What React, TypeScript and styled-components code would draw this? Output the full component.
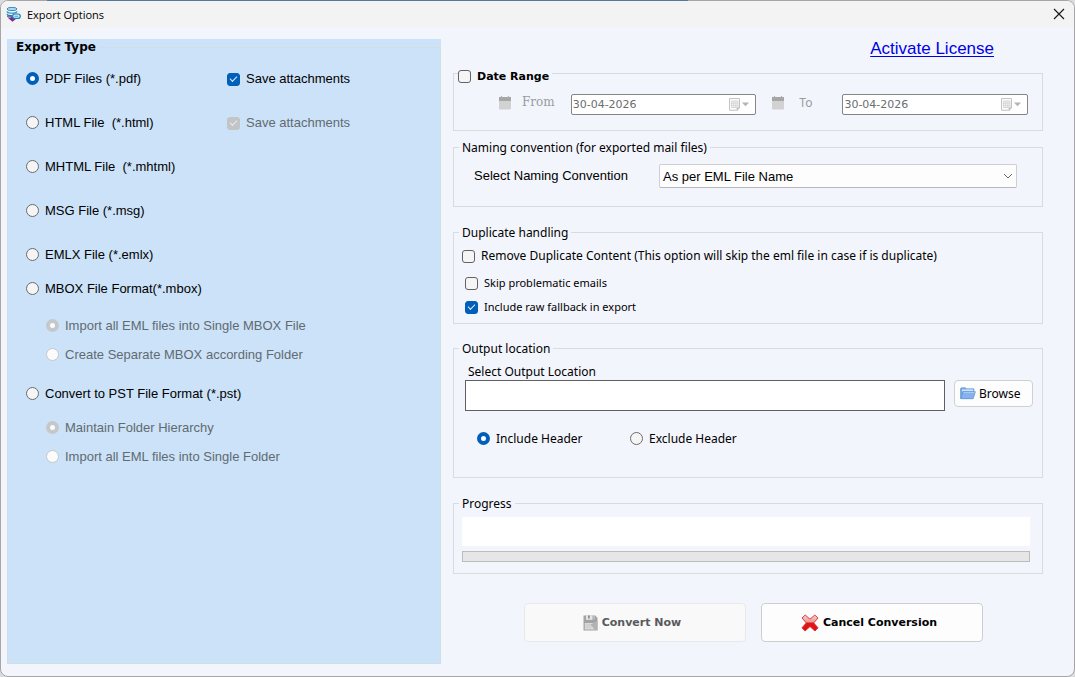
import React from "react";
import styled, { createGlobalStyle, css } from "styled-components";

const SANS = '"Liberation Sans", Arial, sans-serif';
const UI = '"Noto Sans", "Segoe UI", sans-serif';
const VERDANA = '"DejaVu Sans", Verdana, sans-serif';

const GlobalStyle = createGlobalStyle`
  *, *::before, *::after { box-sizing: border-box; }
  body { margin: 0; background: #dcdcde; color: #000; font-family: ${UI}; font-size: 12px; }
`;

const Window = styled.div`
  position: relative;
  display: flex;
  flex-direction: column;
  min-height: 100vh;
  border: 1px solid #a6a6a8;
  border-radius: 8px;
  background: #f3f5fc;
  &::before {
    content: "";
    position: absolute;
    top: -1px;
    left: 46px;
    right: 36%;
    height: 1px;
    background: #55779c;
  }
`;

const TitleBar = styled.header`
  display: flex;
  align-items: center;
  gap: 6px;
  height: 27px;
  padding: 0 8px 0 5px;
  border-radius: 7px 7px 0 0;
  background: #f3f3f3;
`;

const Title = styled.h1`
  flex: 1;
  margin: 0;
  font: 400 11px/18px "Open Sans", "Segoe UI", sans-serif;
`;

const CloseButton = styled.button`
  display: flex;
  padding: 0 1px 2px;
  border: 0;
  background: none;
`;

const Main = styled.main`
  flex: 1;
  display: grid;
  grid-template-columns: minmax(0, 434fr) minmax(0, 590fr);
  gap: 12px;
  padding: 11px 31px 12px 6px;
`;

const Panel = styled.section`
  display: flex;
  background: #cbe2f8;
`;

const groupBase = css`
  min-width: 0;
  margin: 0;
  border: 1px solid #d9dbdf;
`;

const ExportTypes = styled.fieldset`
  ${groupBase}
  flex: 1;
  border-color: #cfdde6;
  padding: 15px 8px 0 18px;
`;

const PanelLegend = styled.legend`
  margin-left: -12px;
  padding: 0 4px 0 2px;
  font: 700 12px/16px ${VERDANA};
`;

const TypeList = styled.div`
  display: flex;
  flex-direction: column;
  gap: 26px;
  margin-bottom: 16px;
`;

const TypeRow = styled.div`
  display: grid;
  grid-template-columns: 201px 1fr;
`;

const SubOptions = styled.div<{ $top: number }>`
  display: flex;
  flex-direction: column;
  gap: 11px;
  padding: ${(p) => p.$top}px 0 21px 20px;
`;

const Option = styled.label<{ $family?: string; $size?: number; $disabled?: boolean }>`
  display: flex;
  align-items: center;
  gap: 6px;
  font: 400 ${(p) => p.$size ?? 12}px/18px ${(p) => p.$family ?? UI};
  color: ${(p) => (p.$disabled ? "#626a71" : "#000")};
  white-space: pre;
`;

const Radio = styled.input.attrs({ type: "radio" })`
  appearance: none;
  flex: none;
  width: 13px;
  height: 13px;
  margin: 0 0 2px;
  border: 1px solid #6c6c6c;
  border-radius: 50%;
  background: #f5f5f5;
  &:checked { border: 4px solid #005fb8; background: #fff; }
  &:disabled { border-color: #c4c8cb; background: #fbfbfb; }
`;

const Check = styled.input.attrs({ type: "checkbox" })`
  appearance: none;
  flex: none;
  display: grid;
  place-content: center;
  width: 13px;
  height: 13px;
  margin: 0;
  border: 1px solid #626262;
  border-radius: 3px;
  background: #f5f5f5;
  &:checked { border-color: #005fb8; background: #005fb8; }
  &:checked:disabled { border-color: #c2c4c6; background: #c2c4c6; }
  &:checked::after {
    content: "";
    width: 7px;
    height: 4px;
    margin-bottom: 2px;
    border: solid #e4eef8;
    border-width: 0 0 1px 1px;
    transform: rotate(-45deg);
  }
`;

const Settings = styled.div`
  display: flex;
  flex-direction: column;
`;

const License = styled.a`
  align-self: flex-end;
  margin: 0 49px 3px 0;
  font: 400 17px/20px ${SANS};
  color: #0000e6;
  text-underline-offset: 2px;
`;

const Group = styled.fieldset<{ $after?: number }>`
  ${groupBase}
  padding: 0;
  margin-bottom: ${(p) => p.$after ?? 17}px;
`;

const GroupBody = styled.div<{ $pad: string }>`
  padding: ${(p) => p.$pad};
`;

const Legend = styled.legend`
  margin-left: 5px;
  padding: 0 3px;
  font: 400 12px/17px ${UI};
`;

const DateLegend = styled.legend`
  margin-left: 4px;
  padding: 6px 3px 0 0;
`;

const DateToggle = styled(Option)`
  font: 700 11px/17px ${VERDANA};
`;

const DateRow = styled.div`
  display: flex;
  align-items: flex-start;
  gap: 16px;
`;

const DateLabel = styled.label<{ $family?: string }>`
  display: flex;
  align-items: center;
  gap: 10px;
  font: 400 12px/17px ${(p) => p.$family ?? UI};
  color: #9a9ba0;
`;

const ToLabel = styled(DateLabel)`
  gap: 14px;
  margin-right: 14px;
`;

const DateBox = styled.div`
  flex: 1;
  min-width: 0;
  display: flex;
  align-items: center;
  height: 21px;
  padding-right: 6px;
  border: 1px solid #858585;
  border-radius: 2px;
  background: #fff;
`;

const DateInput = styled.input`
  flex: 1;
  min-width: 0;
  width: 0;
  padding: 0 0 0 1px;
  border: 0;
  background: none;
  font: 400 11px/17px ${VERDANA};
  color: #6d6d6d;
`;

const NamingRow = styled.label`
  display: grid;
  grid-template-columns: 185px 1fr;
  align-items: center;
  font: 400 13px/18px ${SANS};
`;

const SelectWrap = styled.span`
  display: grid;
  align-items: center;
  border: 1px solid #cfcfd2;
  border-bottom-color: #b8b8ba;
  border-radius: 2px;
  background: #fdfdfe;
  height: 24px;
  & > * { grid-area: 1 / 1; }
  & > svg { justify-self: end; margin-right: 3px; pointer-events: none; }
`;

const Select = styled.select`
  appearance: none;
  width: 100%;
  height: 22px;
  padding: 1px 20px 0 3px;
  border: 0;
  background: none;
  color: #000;
  font: 400 13px/18px ${SANS};
`;

const Stack = styled.div<{ $gap: number; $indent?: number }>`
  display: flex;
  flex-direction: column;
  gap: ${(p) => p.$gap}px;
  padding-left: ${(p) => p.$indent ?? 0}px;
`;

const PathLabel = styled.label`
  display: block;
  margin-left: 3px;
  font: 400 12px/17px ${UI};
`;

const PathRow = styled.div`
  display: flex;
  align-items: flex-start;
  gap: 9px;
`;

const PathInput = styled.input`
  flex: 1;
  min-width: 0;
  height: 31px;
  border: 1px solid #5f6063;
  background: #fff;
`;

const BrowseButton = styled.button`
  display: flex;
  align-items: center;
  gap: 3px;
  width: 79px;
  height: 27px;
  padding: 0 5px;
  border: 1px solid #cfd0d3;
  border-radius: 4px;
  background: #fdfdfe;
  color: #000;
  font: 400 12px/18px ${UI};
`;

const HeaderChoice = styled.div`
  display: grid;
  grid-template-columns: 153px 1fr;
  margin-top: 19px;
  padding-left: 12px;
`;

const StatusBox = styled.output`
  display: block;
  height: 29px;
  background: #fff;
`;

const ProgressBar = styled.progress`
  appearance: none;
  display: block;
  width: 100%;
  height: 11px;
  margin-top: 5px;
  border: 1px solid #bcbcbc;
  background: #e6e6e6;
  &::-webkit-progress-bar { background: #e6e6e6; }
`;

const Actions = styled.div`
  display: grid;
  grid-template-columns: 1fr 1fr;
  gap: 15px;
  margin-top: 12px;
  padding: 0 60px 0 71px;
`;

const ActionButton = styled.button`
  display: flex;
  align-items: center;
  justify-content: center;
  gap: 4px;
  height: 39px;
  padding: 0 12px 0 6px;
  border: 1px solid #cdced0;
  border-radius: 4px;
  background: #fdfdfe;
  color: #000;
  font: 700 11px/18px ${VERDANA};
  &:disabled { border-color: #e7e8ec; background: #f9f9fa; color: #5a5a5a; }
`;

const AppIcon = () => (
  <svg width="15" height="15" viewBox="0 0 15 15" aria-hidden="true">
    <path d="M1 2v7c0 1 2 2 5 2s5-1 5-2V2z" fill="#e3f2fb" />
    <ellipse cx="6" cy="2" rx="5" ry="1.6" fill="#a9dcf5" stroke="#2581b8" strokeWidth=".9" />
    <path d="M1 4.3c0 2.6 10 2.6 10 0M1 6.8c0 2.6 10 2.6 10 0" fill="none" stroke="#2f86b4" strokeWidth="1.1" />
    <path d="M1.500 10.500h3l1.500-.7 4.500 1.700L6.500 14.800z" fill="#7b2d80" />
    <path d="M1 9.200h5l2 1.500" fill="none" stroke="#2b5fa3" strokeWidth="1.300" />
    <rect x="6.600" y="7" width="7.700" height="4.400" rx="2.200" fill="#d9f0fb" stroke="#1d7fba" strokeWidth="1.200" />
    <path d="M8.500 9.200h3.800" stroke="#3aa0d4" strokeWidth="1" />
  </svg>
);

const CloseIcon = () => (
  <svg width="12" height="12" viewBox="0 0 12 12" aria-hidden="true">
    <path d="M1 1l10 10M11 1L1 11" stroke="#1a1a1a" strokeWidth="1.200" />
  </svg>
);

const CalendarIcon = () => (
  <svg width="13" height="14" viewBox="0 0 13 14" aria-hidden="true">
    <rect x="0" y="1" width="12" height="12.500" rx="1" fill="#d2d2d3" />
    <path d="M0 1h12v4H0z" fill="#a6a6a6" />
    <path d="M2.500 0v1.500M9.500 0v1.500" stroke="#b4b4b4" strokeWidth="1.200" />
  </svg>
);

const PickerIcon = () => (
  <svg width="20" height="13" viewBox="0 0 20 13" aria-hidden="true">
    <path d="M.5 .5h10v9.500l-2.300 2.300H.5z" fill="#fafafa" stroke="#c4c4c4" />
    <path d="M2.500 3h6.500v6.500H2.500zM2.500 5.200H9M2.500 7.400H9M4.700 3v6.500M6.900 3v6.500" fill="none" stroke="#cfcfcf" strokeWidth=".8" />
    <path d="M8.200 12.300V10h2.300" fill="none" stroke="#b8b8b8" />
    <path d="M13 4.500h7l-3.500 3.800z" fill="#b4b4b4" />
  </svg>
);

const ChevronIcon = () => (
  <svg width="10" height="6" viewBox="0 0 10 6" aria-hidden="true">
    <path d="M1 1l4 4 4-4" fill="none" stroke="#666" />
  </svg>
);

const FolderIcon = () => (
  <svg width="16" height="13" viewBox="0 0 16 13" aria-hidden="true">
    <path d="M.5 11.500V1.500L1.200.8h4.300l1 1h7.500v3L12 11.500z" fill="#78a6e0" stroke="#6c9bd8" strokeWidth=".7" />
    <path d="M2 2.400h11.300v2H2z" fill="#cfe3fa" />
    <path d="M.8 11.700L3 4.700h12.400L13.200 11.700z" fill="#85b1ec" stroke="#5f92d6" strokeWidth=".7" />
    <path d="M3.600 5.500h11" stroke="#b2d1f6" strokeWidth=".8" />
  </svg>
);

const SaveIcon = () => (
  <svg width="15" height="16" viewBox="0 0 15 16" aria-hidden="true">
    <path d="M.5.500h11.800L14.500 3v12.500H.5z" fill="#a3a3a3" />
    <path d="M3 .5h6.500v4.300H3z" fill="#e6e6e6" />
    <path d="M5 .5h1.800v3H5z" fill="#8e8e8e" />
    <path d="M10.500 .5h1.200v4h-1.200z" fill="#c9c9c9" />
    <path d="M1.800 8h10v6.500h-10z" fill="#dadada" />
    <path d="M2.500 10h6M2.500 12h6" stroke="#c4c4c4" strokeWidth=".8" />
    <path d="M7.500 9.500l7-3.500V15h-2.500z" fill="#b3b3b3" />
  </svg>
);

const CancelIcon = () => (
  <svg width="18" height="18" viewBox="0 0 18 18" aria-hidden="true">
    <defs>
      <linearGradient id="cross" x1="0" y1="0" x2="0" y2="1">
        <stop offset="0" stopColor="#f9cfcc" />
        <stop offset=".42" stopColor="#f09a97" />
        <stop offset=".52" stopColor="#dc1717" />
        <stop offset="1" stopColor="#e60f0f" />
      </linearGradient>
    </defs>
    <path
      d="M4.200 1L9 5.200 13.800 1 17 4 12.700 8.900 17 13.800 14 17 9 12.600 4 17 1 13.800 5.300 8.900 1 4z"
      fill="url(#cross)" stroke="#cf2f2f" strokeWidth=".9" strokeLinejoin="round"
    />
  </svg>
);

interface ChoiceProps {
  name: string;
  text: string;
  checked?: boolean;
  disabled?: boolean;
}

const ExportChoice = ({ name, text, checked, disabled }: ChoiceProps) => (
  <Option $family={SANS} $size={13} $disabled={disabled}>
    <Radio name={name} defaultChecked={checked} disabled={disabled} />
    {text}
  </Option>
);

const SaveAttachments = ({ disabled }: { disabled?: boolean }) => (
  <Option $family={SANS} $size={13} $disabled={disabled}>
    <Check defaultChecked disabled={disabled} />
    Save attachments
  </Option>
);

export default function App() {
  return (
    <>
      <GlobalStyle />
      <Window>
        <TitleBar>
          <AppIcon />
          <Title>Export Options</Title>
          <CloseButton type="button" aria-label="Close"><CloseIcon /></CloseButton>
        </TitleBar>
        <Main>
          <Panel>
            <ExportTypes>
              <PanelLegend>Export Type</PanelLegend>
              <TypeList>
                <TypeRow>
                  <ExportChoice name="type" text="PDF Files (*.pdf)" checked />
                  <SaveAttachments />
                </TypeRow>
                <TypeRow>
                  <ExportChoice name="type" text="HTML File  (*.html)" />
                  <SaveAttachments disabled />
                </TypeRow>
                <ExportChoice name="type" text="MHTML File  (*.mhtml)" />
                <ExportChoice name="type" text="MSG File (*.msg)" />
                <ExportChoice name="type" text="EMLX File (*.emlx)" />
              </TypeList>
              <ExportChoice name="type" text="MBOX File Format(*.mbox)" />
              <SubOptions $top={19}>
                <ExportChoice name="mbox" text="Import all EML files into Single MBOX File" checked disabled />
                <ExportChoice name="mbox" text="Create Separate MBOX according Folder" disabled />
              </SubOptions>
              <ExportChoice name="type" text="Convert to PST File Format (*.pst)" />
              <SubOptions $top={16}>
                <ExportChoice name="pst" text="Maintain Folder Hierarchy" checked disabled />
                <ExportChoice name="pst" text="Import all EML files into Single Folder" disabled />
              </SubOptions>
            </ExportTypes>
          </Panel>
          <Settings>
            <License href="#license">Activate License</License>
            <Group $after={8}>
              <DateLegend>
                <DateToggle><Check />Date Range</DateToggle>
              </DateLegend>
              <GroupBody $pad="9px 14px 15px 45px">
                <DateRow>
                  <DateLabel $family={'"DejaVu Serif", serif'} htmlFor="from"><CalendarIcon />From</DateLabel>
                  <DateBox>
                    <DateInput id="from" defaultValue="30-04-2026" disabled />
                    <PickerIcon />
                  </DateBox>
                  <ToLabel htmlFor="to"><CalendarIcon />To</ToLabel>
                  <DateBox>
                    <DateInput id="to" defaultValue="30-04-2026" disabled />
                    <PickerIcon />
                  </DateBox>
                </DateRow>
              </GroupBody>
            </Group>
            <Group>
              <Legend>Naming convention (for exported mail files)</Legend>
              <GroupBody $pad="8px 25px 18px 20px">
                <NamingRow>
                  Select Naming Convention
                  <SelectWrap>
                    <Select defaultValue="eml"><option value="eml">As per EML File Name</option></Select>
                    <ChevronIcon />
                  </SelectWrap>
                </NamingRow>
              </GroupBody>
            </Group>
            <Group $after={16}>
              <Legend>Duplicate handling</Legend>
              <GroupBody $pad="6px 8px 7px">
                <Stack $gap={9}>
                  <Option><Check />Remove Duplicate Content (This option will skip the eml file in case if is duplicate)</Option>
                  <Stack $gap={6} $indent={3}>
                    <Option $size={11}><Check />Skip problematic emails</Option>
                    <Option $size={11}><Check defaultChecked />Include raw fallback in export</Option>
                  </Stack>
                </Stack>
              </GroupBody>
            </Group>
            <Group>
              <Legend>Output location</Legend>
              <GroupBody $pad="6px 9px 29px 11px">
                <PathLabel htmlFor="path">Select Output Location</PathLabel>
                <PathRow>
                  <PathInput id="path" />
                  <BrowseButton type="button"><FolderIcon />Browse</BrowseButton>
                </PathRow>
                <HeaderChoice>
                  <Option><Radio name="header" defaultChecked />Include Header</Option>
                  <Option><Radio name="header" />Exclude Header</Option>
                </HeaderChoice>
              </GroupBody>
            </Group>
            <Group>
              <Legend>Progress</Legend>
              <GroupBody $pad="5px 12px 11px 8px">
                <StatusBox aria-label="Status" />
                <ProgressBar value={0} max={100} aria-label="Progress" />
              </GroupBody>
            </Group>
            <Actions>
              <ActionButton type="button" disabled><SaveIcon />Convert Now</ActionButton>
              <ActionButton type="button"><CancelIcon />Cancel Conversion</ActionButton>
            </Actions>
          </Settings>
        </Main>
      </Window>
    </>
  );
}
